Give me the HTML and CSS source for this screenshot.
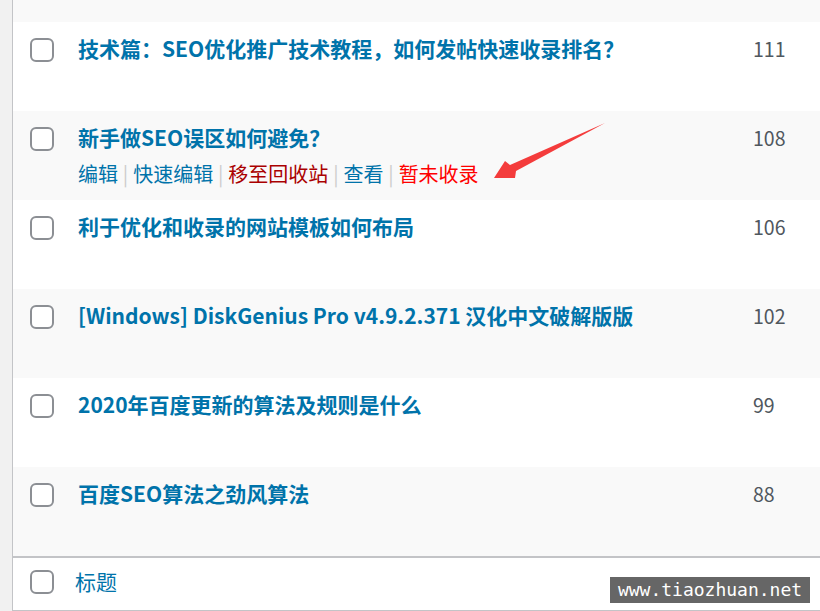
FILE: index.html
```html
<!DOCTYPE html>
<html lang="zh-CN">
<head>
<meta charset="utf-8">
<title>文章列表</title>
<link rel="stylesheet" href="styles.css">
</head>
<body>
<div class="wrap">
  <div class="list">
    <div class="row row-alt row-partial"></div>

    <div class="row">
      <div class="cb"><span class="box"></span></div>
      <div class="title"><strong><a class="row-title">技术篇：SEO优化推广技术教程，如何发帖快速收录排名？</a></strong></div>
      <div class="count">111</div>
    </div>

    <div class="row row-alt">
      <div class="cb"><span class="box"></span></div>
      <div class="title">
        <strong><a class="row-title">新手做SEO误区如何避免？</a></strong>
        <div class="actions">
          <a class="act">编辑</a><span class="sep"> | </span><a class="act">快速编辑</a><span class="sep"> | </span><a class="act act-trash">移至回收站</a><span class="sep"> | </span><a class="act">查看</a><span class="sep"> | </span><a class="act act-red">暂未收录</a>
        </div>
      </div>
      <div class="count">108</div>
    </div>

    <div class="row">
      <div class="cb"><span class="box"></span></div>
      <div class="title"><strong><a class="row-title">利于优化和收录的网站模板如何布局</a></strong></div>
      <div class="count">106</div>
    </div>

    <div class="row row-alt">
      <div class="cb"><span class="box"></span></div>
      <div class="title"><strong><a class="row-title">[Windows] DiskGenius Pro v4.9.2.371 汉化中文破解版版</a></strong></div>
      <div class="count">102</div>
    </div>

    <div class="row">
      <div class="cb"><span class="box"></span></div>
      <div class="title"><strong><a class="row-title">2020年百度更新的算法及规则是什么</a></strong></div>
      <div class="count">99</div>
    </div>

    <div class="row row-alt">
      <div class="cb"><span class="box"></span></div>
      <div class="title"><strong><a class="row-title">百度SEO算法之劲风算法</a></strong></div>
      <div class="count">88</div>
    </div>

    <div class="foot">
      <div class="cb cb-foot"><span class="box"></span></div>
      <div class="foot-title">标题</div>
    </div>
  </div>

  <svg class="arrow" width="820" height="611" viewBox="0 0 820 611" aria-hidden="true">
    <polygon points="605,123 510,165 505,161 494,178 515,178 516,171" fill="#f43c3c"/>
  </svg>

  <div class="watermark">www.tiaozhuan.net</div>
</div>
</body>
</html>
```

FILE: styles.css
```css
html, body {
  margin: 0;
  padding: 0;
  background: #f1f1f1;
  overflow: hidden;
}
body {
  width: 820px;
  height: 611px;
  font-family: "Noto Sans CJK SC", "Noto Sans", sans-serif;
  color: #50575e;
}
.wrap {
  position: relative;
  width: 820px;
  height: 611px;
  padding-left: 12px;
  box-sizing: border-box;
}
.list {
  width: 830px;
  border-left: 1px solid #c3c4c7;
  border-bottom: 2px solid #c3c4c7;
  background: #fff;
}
.row {
  display: grid;
  grid-template-columns: 50px 675px 1fr;
  height: 89px;
  background: #fff;
  box-sizing: border-box;
}
.row-alt {
  background: #f9f9f9;
}
.row-partial {
  height: 22px;
}
.cb {
  padding: 16px 0 0 17px;
}
.box {
  display: block;
  width: 24px;
  height: 24px;
  box-sizing: border-box;
  border: 2px solid #8c8f94;
  border-radius: 6px;
  background: #fff;
}
.title {
  padding: 12px 15px 0 15px;
}
.title strong {
  display: block;
  margin-bottom: 4px;
}
.row-title {
  font-size: 21px;
  line-height: 29px;
  font-weight: 700;
  color: #0073aa;
  text-decoration: none;
}
.actions {
  padding-top: 3px;
  font-size: 20px;
  line-height: 29px;
  color: #0073aa;
}
.act {
  color: #0073aa;
}
.act-trash {
  color: #a00;
}
.act-red {
  color: #f00;
}
.sep {
  color: #ccc;
  white-space: pre;
  margin: 0 0.4px;
}
.count {
  padding: 12px 15px 0 15px;
  font-size: 19.5px;
  line-height: 29px;
  color: #50575e;
}
.foot {
  display: flex;
  height: 54px;
  border-top: 2px solid #c3c4c7;
  box-sizing: border-box;
  background: #fff;
}
.cb-foot {
  width: 50px;
  padding-top: 12px;
  box-sizing: border-box;
}
.foot-title {
  padding: 9px 0 0 12px;
  font-size: 21px;
  line-height: 29px;
  color: #0073aa;
}
.arrow {
  position: absolute;
  left: 0;
  top: 0;
  pointer-events: none;
}
.watermark {
  position: absolute;
  left: 610px;
  top: 577px;
  width: 200px;
  height: 26px;
  background: #666;
  color: #fff;
  font-family: "DejaVu Sans Mono", "Liberation Mono", monospace;
  font-size: 18px;
  line-height: 26px;
  text-align: center;
}
```
